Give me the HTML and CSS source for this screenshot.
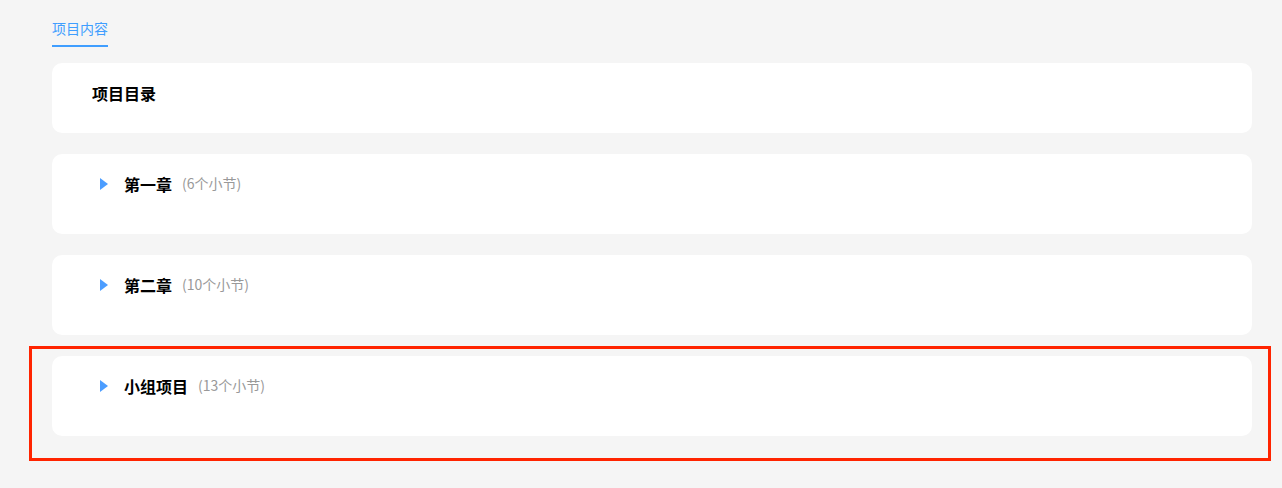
FILE: index.html
```html
<!DOCTYPE html>
<html lang="zh-CN">
<head>
<meta charset="UTF-8">
<meta name="viewport" content="width=device-width, initial-scale=1.0">
<title>项目内容</title>
<link rel="stylesheet" href="styles.css">
</head>
<body>
<div class="pagina">
<div class="tabs">
<span class="tab activo">项目内容</span>
</div>

<div class="lista">
<div class="tarjeta cabecera">
<h2>项目目录</h2>
</div>

<div class="tarjeta capitulo">
<span class="flecha"></span>
<span class="titulo">第一章</span>
<span class="cuenta">(6个小节)</span>
</div>

<div class="tarjeta capitulo">
<span class="flecha"></span>
<span class="titulo">第二章</span>
<span class="cuenta">(10个小节)</span>
</div>

<!-- marcado en rojo -->
<div class="tarjeta capitulo marcado">
<span class="flecha"></span>
<span class="titulo">小组项目</span>
<span class="cuenta">(13个小节)</span>
</div>
</div>
</div>
</body>
</html>
```

FILE: styles.css
```css
html, body {
margin: 0;
padding: 0;
background-color: #f5f5f5;
font-family: "Microsoft YaHei", "Noto Sans CJK SC", "Noto Sans", sans-serif;
}

.pagina {
padding: 0 30px 40px 52px;
}

.tabs {
display: flex;
padding-top: 17px;
height: 32px;
}

.tab {
font-size: 14px;
line-height: 22px;
height: 28px;
color: #409eff;
border-bottom: 2px solid #409eff;
}

.lista {
margin-top: 14px;
display: flex;
flex-direction: column;
gap: 21px;
}

.tarjeta {
background-color: #fff;
border-radius: 10px;
box-sizing: border-box;
}

.cabecera {
height: 70px;
padding: 19px 40px;
}

.cabecera h2 {
margin: 0;
font-size: 16px;
line-height: 22px;
font-weight: bold;
color: #000;
}

.capitulo {
height: 80px;
padding: 19px 48px;
display: flex;
align-items: flex-start;
}

.flecha {
width: 0;
height: 0;
margin-top: 5px;
border-top: 6.5px solid transparent;
border-bottom: 6.5px solid transparent;
border-left: 8px solid #4c9dff;
}

.titulo {
margin-left: 16px;
font-size: 16px;
line-height: 22px;
font-weight: bold;
color: #000;
}

.cuenta {
margin-left: 10px;
font-size: 14px;
line-height: 20px;
color: #999;
}

.marcado {
position: relative;
}

.marcado::after {
content: "";
position: absolute;
top: -10px;
left: -23px;
right: -19px;
bottom: -25px;
border: 3px solid #ff2400;
}
```
